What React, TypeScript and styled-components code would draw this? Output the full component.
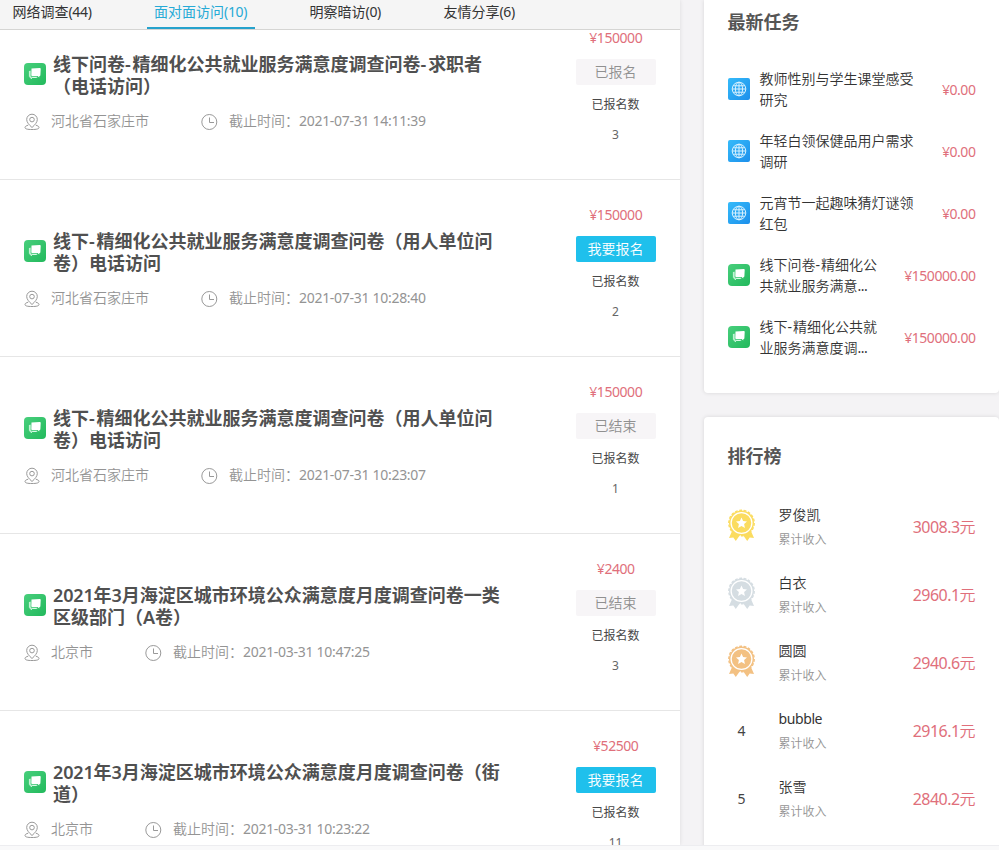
import React from 'react';
import styled, { createGlobalStyle } from 'styled-components';

const GlobalStyle = createGlobalStyle`
  * { box-sizing: border-box; }
  body {
    margin: 0;
    background: #f9f9fa;
    font-family: "Noto Sans", "Noto Sans CJK SC", sans-serif;
    font-size: 14px;
    color: #444;
    text-spacing-trim: space-all;
    overflow: hidden;
  }
`;

const Page = styled.div`
  display: flex;
  gap: 24px;
  height: 845px;
  overflow: hidden;
  background: #f4f3f5;
`;

const PageEnd = styled.div`
  height: 5px;
  background: #f9f9fa;
  border-top: 1px solid #ededf0;
`;

const Main = styled.main`
  width: 680px;
  flex: none;
  background: #fff;
  box-shadow: 0 0 4px rgba(0, 0, 0, 0.1);
`;

const TabBar = styled.nav`
  display: flex;
  gap: 47.500px;
  height: 30px;
  padding-left: 5px;
  background: #f5f5f5;
  border-bottom: 1px solid #d5d5d3;
`;

const Tab = styled.div<{ $active?: boolean }>`
  height: 29px;
  padding: 0 7.500px;
  line-height: 23px;
  white-space: nowrap;
  color: ${(p) => (p.$active ? '#26aad6' : '#333')};
  border-bottom: 2px solid ${(p) => (p.$active ? '#26a2cc' : 'transparent')};
`;

const LatinRun = styled.span<{ $tight: number; $weight: number }>`
  letter-spacing: ${(p) => -p.$tight}px;
  font-weight: ${(p) => p.$weight};
`;

const List = styled.div`
  height: 815px;
  overflow: hidden;
`;

const Item = styled.article`
  display: flex;
  justify-content: space-between;
  height: 177px;
  padding: 0 24px;
  border-bottom: 1px solid #e6e6e6;
  &:first-child { margin-top: -27px; }
`;

const ItemBody = styled.div`
  padding-top: 50px;
`;

const TitleRow = styled.div`
  display: flex;
  align-items: flex-start;
  gap: 7px;
  height: 44px;
  svg { margin-top: 10px; }
`;

const ItemTitle = styled.h3`
  margin: 0;
  font-size: 18px;
  line-height: 22px;
  font-weight: 700;
  color: #505050;
  white-space: pre;
`;

const Meta = styled.div`
  display: flex;
  align-items: center;
  height: 20px;
  margin-top: 14px;
  line-height: 20px;
  color: #949494;
  svg { margin-top: 1px; }
`;

const MetaText = styled.span`
  margin: 0 52px 0 11px;
  font-weight: 350;
`;

const ItemSide = styled.div`
  display: flex;
  flex-direction: column;
  align-items: center;
  width: 80px;
  padding-top: 25px;
  line-height: 20px;
`;

const Price = styled.span`
  margin-right: 0.500px;
  color: #e06f7b;
  white-space: nowrap;
`;

const ActionButton = styled.button<{ $active: boolean }>`
  width: 80px;
  height: 26px;
  margin: 11px 0 10px;
  padding: 0 1px 1px 0;
  border: 0;
  border-radius: 2px;
  font: inherit;
  font-weight: 350;
  line-height: 25px;
  background: ${(p) => (p.$active ? '#1fc0ec' : '#f7f5f7')};
  color: ${(p) => (p.$active ? '#fff' : '#909090')};
`;

const CountLabel = styled.span`
  margin-right: 1px;
  font-size: 12px;
  color: #484848;
`;

const Count = styled.span`
  margin: 10px 1px 0 0;
  font-size: 12px;
  color: #666;
`;

const Sidebar = styled.aside`
  display: flex;
  flex-direction: column;
  flex: 1;
  gap: 24px;
`;

const Card = styled.section<{ $height: number; $top: number }>`
  flex: none;
  height: ${(p) => p.$height}px;
  padding: ${(p) => p.$top}px 23px 0 24px;
  background: #fff;
  border-radius: ${(p) => (p.$top > 20 ? '4px' : '0 0 4px 4px')};
  box-shadow: 0 0 4px rgba(0, 0, 0, 0.12);
`;

const CardTitle = styled.h2`
  margin: 0 0 0 -0.500px;
  font-size: 18px;
  line-height: 24px;
  font-weight: 700;
  color: #555;
`;

const TaskList = styled.div`
  display: flex;
  flex-direction: column;
  gap: 20px;
  margin-top: 34px;
`;

const Task = styled.div`
  display: flex;
  align-items: center;
  height: 42px;
`;

const TaskName = styled.div`
  flex: 1;
  margin-left: 9.500px;
  line-height: 21px;
  white-space: pre;
  font-weight: 350;
  color: #333;
`;

const RankList = styled.div`
  margin-top: 24px;
`;

const RankRow = styled.div`
  display: flex;
  align-items: center;
  height: 68px;
`;

const Place = styled.div`
  display: flex;
  justify-content: center;
  width: 27px;
  color: #444;
  svg { margin-bottom: 2px; }
`;

const Person = styled.div`
  flex: 1;
  margin-left: 23.500px;
`;

const PersonName = styled.div`
  margin-top: 1px;
  line-height: 27px;
  font-weight: 350;
  color: #333;
`;

const PersonNote = styled.div`
  font-size: 12px;
  line-height: 24px;
  font-weight: 350;
  color: #949494;
`;

const Income = styled.span`
  margin-right: 0.500px;
  font-size: 16px;
  font-weight: 350;
  color: #e06f7b;
`;

interface MixedProps {
  text: string;
  tight?: number;
  hyphenTight?: number;
  weight?: number;
}

function Mixed({ text, tight = 0.45, hyphenTight = -1, weight = 400 }: MixedProps) {
  return (
    <>
      {text.split(/([\x20-\x7e¥]+)/).map((part, i) =>
        i % 2 ? (
          <LatinRun key={i} $tight={part === '-' ? hyphenTight : tight} $weight={weight}>{part}</LatinRun>
        ) : part,
      )}
    </>
  );
}

function ChatIcon() {
  return (
    <svg width="22" height="22" viewBox="0 0 22 22">
      <defs>
        <linearGradient id="chatFill" x1="0" y1="0" x2="1" y2="1">
          <stop offset="0" stopColor="#48cf7c" />
          <stop offset="1" stopColor="#22b95c" />
        </linearGradient>
      </defs>
      <rect width="22" height="22" rx="4" fill="url(#chatFill)" />
      <path d="M7.500 5.500 15.700 5c.6 0 1 .4 1 1l-.3 5.900c0 .6-.4 1-1 1l-.2 1.600-1.600-1.500H8.300c-.6 0-1-.4-1-1z" fill="#fff" />
      <path d="M6.200 7.700v5.200c0 .8.500 1.300 1.300 1.300h5.800M5.400 8v5.400c0 .7.500 1.100 1.200 1.100h.5v1.300l1.400-1.300h4" fill="none" stroke="#e9fff1" strokeWidth=".8" />
    </svg>
  );
}

function GlobeIcon() {
  return (
    <svg width="22" height="22" viewBox="0 0 22 22">
      <defs>
        <linearGradient id="globeFill" x1="0" y1="0" x2="1" y2="1">
          <stop offset="0" stopColor="#35bbfa" />
          <stop offset="1" stopColor="#1c8feb" />
        </linearGradient>
      </defs>
      <rect width="22" height="22" rx="2" fill="url(#globeFill)" />
      <g fill="none" stroke="#d9f2ff" strokeWidth="1">
        <circle cx="11" cy="11" r="6.800" />
        <ellipse cx="11" cy="11" rx="3.600" ry="6.800" />
        <path d="M11 4.200v13.600M4.200 11h13.600M5.200 7.800h11.600M5.200 14.200h11.600" />
      </g>
    </svg>
  );
}

function PinIcon() {
  return (
    <svg width="16" height="18" viewBox="0 0 16 18" fill="none" stroke="#999" strokeWidth="1">
      <path d="M8 14.500C5 11.800 2.700 9.200 2.700 6.500a5.300 5.300 0 0 1 10.600 0c0 2.700-2.300 5.300-5.300 8z" />
      <circle cx="8" cy="6.600" r="2.300" />
      <path d="M4.200 12.200C2.300 12.700 1 13.400 1 14.500 1 16 3.500 16.500 8 16.500s7-.5 7-2c0-1.100-1.300-1.800-3.200-2.300" />
    </svg>
  );
}

function ClockIcon() {
  return (
    <svg width="17" height="18" viewBox="0 0 17 18" fill="none" stroke="#999" strokeWidth="1">
      <circle cx="8.300" cy="9" r="7.500" />
      <path d="M8.500 4.500v5h4.500" />
    </svg>
  );
}

function Medal({ color }: { color: string }) {
  return (
    <svg width="27" height="33" viewBox="0 0 27 33">
      <path d="M4.500 21 1 29l4.300-.5 2.500 3.500L12 26h3l4.200 6 2.500-3.500 4.300.5L22.500 21z" fill={color} />
      <circle cx="13.500" cy="14" r="12.500" fill={color} />
      <circle cx="13.500" cy="14" r="12.700" fill="none" stroke={color} strokeWidth="1.400" strokeDasharray="2.800 1.600" />
      <circle cx="13.500" cy="14" r="10.400" fill="none" stroke="#fff" strokeWidth="1.300" />
      <path d="m13.500 8.500 1.600 3.500 3.900.5-2.900 2.600.8 3.900-3.400-1.900L10.100 19l.8-3.900L8 12.500l3.900-.5z" fill="#fff" />
    </svg>
  );
}

const tabs = ['网络调查(44)', '面对面访问(10)', '明察暗访(0)', '友情分享(6)'];

const surveys = [
  { title: '线下问卷-精细化公共就业服务满意度调查问卷-求职者\n（电话访问）', city: '河北省石家庄市', deadline: '2021-07-31 14:11:39', price: '¥150000', action: '已报名', count: '3' },
  { title: '线下-精细化公共就业服务满意度调查问卷（用人单位问\n卷）电话访问', city: '河北省石家庄市', deadline: '2021-07-31 10:28:40', price: '¥150000', action: '我要报名', count: '2' },
  { title: '线下-精细化公共就业服务满意度调查问卷（用人单位问\n卷）电话访问', city: '河北省石家庄市', deadline: '2021-07-31 10:23:07', price: '¥150000', action: '已结束', count: '1' },
  { title: '2021年3月海淀区城市环境公众满意度月度调查问卷一类\n区级部门（A卷）', city: '北京市', deadline: '2021-03-31 10:47:25', price: '¥2400', action: '已结束', count: '3' },
  { title: '2021年3月海淀区城市环境公众满意度月度调查问卷（街\n道）', city: '北京市', deadline: '2021-03-31 10:23:22', price: '¥52500', action: '我要报名', count: '11' },
];

const tasks = [
  { name: '教师性别与学生课堂感受\n研究', price: '¥0.00', online: true },
  { name: '年轻白领保健品用户需求\n调研', price: '¥0.00', online: true },
  { name: '元宵节一起趣味猜灯谜领\n红包', price: '¥0.00', online: true },
  { name: '线下问卷-精细化公\n共就业服务满意...', price: '¥150000.00', online: false },
  { name: '线下-精细化公共就\n业服务满意度调...', price: '¥150000.00', online: false },
];

const medals = ['#fbdc60', '#d5dde2', '#f3c183'];

const ranking = [
  { name: '罗俊凯', income: '3008.3元' },
  { name: '白衣', income: '2960.1元' },
  { name: '圆圆', income: '2940.6元' },
  { name: 'bubble', income: '2916.1元' },
  { name: '张雪', income: '2840.2元' },
];

export default function App() {
  return (
    <>
      <GlobalStyle />
      <Page>
        <Main>
          <TabBar>
            {tabs.map((tab, i) => (
              <Tab key={tab} $active={i === 1}><Mixed text={tab} tight={0.35} /></Tab>
            ))}
          </TabBar>
          <List>
            {surveys.map((s, i) => (
              <Item key={i}>
                <ItemBody>
                  <TitleRow>
                    <ChatIcon />
                    <ItemTitle><Mixed text={s.title} tight={0.15} hyphenTight={-1.8} weight={600} /></ItemTitle>
                  </TitleRow>
                  <Meta>
                    <PinIcon />
                    <MetaText>{s.city}</MetaText>
                    <ClockIcon />
                    <MetaText><Mixed text={`截止时间：${s.deadline}`} tight={0.29} /></MetaText>
                  </Meta>
                </ItemBody>
                <ItemSide>
                  <Price><Mixed text={s.price} /></Price>
                  <ActionButton $active={s.action === '我要报名'}>{s.action}</ActionButton>
                  <CountLabel>已报名数</CountLabel>
                  <Count>{s.count}</Count>
                </ItemSide>
              </Item>
            ))}
          </List>
        </Main>
        <Sidebar>
          <Card $height={393} $top={10}>
            <CardTitle>最新任务</CardTitle>
            <TaskList>
              {tasks.map((t) => (
                <Task key={t.name}>
                  {t.online ? <GlobeIcon /> : <ChatIcon />}
                  <TaskName><Mixed text={t.name} /></TaskName>
                  <Price><Mixed text={t.price} /></Price>
                </Task>
              ))}
            </TaskList>
          </Card>
          <Card $height={460} $top={27}>
            <CardTitle>排行榜</CardTitle>
            <RankList>
              {ranking.map((r, i) => (
                <RankRow key={r.name}>
                  <Place>{i < 3 ? <Medal color={medals[i]} /> : i + 1}</Place>
                  <Person>
                    <PersonName><Mixed text={r.name} tight={0.4} /></PersonName>
                    <PersonNote>累计收入</PersonNote>
                  </Person>
                  <Income><Mixed text={r.income} tight={0.55} /></Income>
                </RankRow>
              ))}
            </RankList>
          </Card>
        </Sidebar>
      </Page>
      <PageEnd />
    </>
  );
}
